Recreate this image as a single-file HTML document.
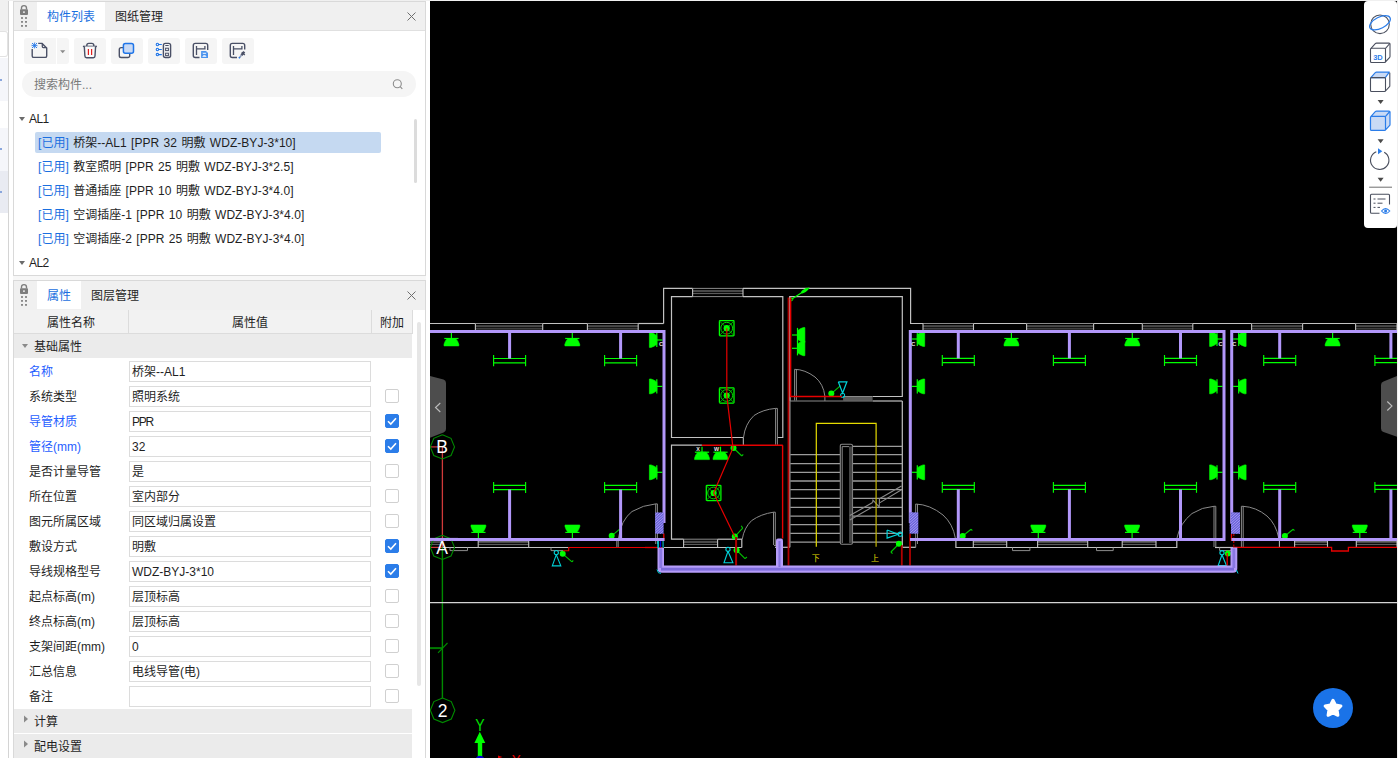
<!DOCTYPE html>
<html lang="zh-CN">
<head>
<meta charset="utf-8">
<title>构件列表</title>
<style>
html,body{margin:0;padding:0;}
body{width:1398px;height:758px;overflow:hidden;position:relative;background:#f7f7f7;
  font-family:"Liberation Sans","Noto Sans CJK SC",sans-serif;font-size:12px;color:#1f1f1f;}
.abs{position:absolute;}
#strip{left:0;top:0;width:9px;height:758px;background:#fff;border-right:1px solid #d4d4d4;box-sizing:border-box;}
#strip div{position:absolute;left:0;width:8px;}
#gapL{left:9px;top:0;width:4px;height:758px;background:#fff;}
.panel{position:absolute;left:13px;width:413px;background:#fff;border:1px solid #d9d9d9;box-sizing:border-box;}
.phead{position:absolute;left:0;top:0;right:0;height:29px;background:#f0f0f0;border-bottom:1px solid #e0e0e0;box-sizing:border-box;}
.tab{position:absolute;top:0;height:28px;line-height:30px;text-align:center;font-size:12px;color:#1f1f1f;white-space:nowrap;}
.tab.on{background:#fff;color:#1a6fe0;}
.lock{position:absolute;left:4px;top:2px;}
.close{position:absolute;right:9px;top:10px;}
.tb{position:absolute;top:36px;height:26px;background:#f5f5f5;border-radius:3px;}
.tb svg{position:absolute;left:0;top:0;}
#search{position:absolute;left:8px;top:69px;width:394px;height:26px;border-radius:13px;background:#f5f5f5;}
#search span{position:absolute;left:12px;top:0;line-height:29px;color:#7a7a7a;font-size:12px;}
.tree{position:absolute;left:0;height:24px;line-height:24px;white-space:nowrap;font-size:12px;}
.tree b{font-weight:normal;color:#1a6fe0;}
.tree{letter-spacing:0.04px;word-spacing:1px;}
.tree s{text-decoration:none;letter-spacing:0;}
.sel{position:absolute;left:21px;top:130px;width:346px;height:21px;background:#c5d9f1;border-radius:2px;}
.tri{position:absolute;width:0;height:0;border-left:3px solid transparent;border-right:3px solid transparent;border-top:4px solid #6b6b6b;}
.sb{position:absolute;width:3px;border-radius:2px;background:#dcdcdc;}
.th{position:absolute;top:30px;height:22px;line-height:22px;text-align:center;background:#f2f2f2;border-right:1px solid #dcdcdc;border-bottom:1px solid #dcdcdc;box-sizing:border-box;font-size:12px;}
.grp{position:absolute;left:0;width:398px;height:24px;line-height:26px;background:#ebebeb;font-size:12px;}
.grp span{position:absolute;left:20px;}
.pn{position:absolute;left:15px;height:25px;line-height:27px;font-size:12px;white-space:nowrap;}
.pn.b{color:#1f5eff;}
.pv{position:absolute;left:115px;width:242px;height:21px;line-height:21px;border:1px solid #dcdcdc;box-sizing:border-box;padding-left:2px;font-size:12px;white-space:nowrap;background:#fff;}
.cb{position:absolute;left:371px;width:14px;height:14px;border:1px solid #d0d0d0;border-radius:2px;box-sizing:border-box;background:#fff;}
.cb.on{background:#2b7de9;border-color:#2b7de9;}
.cb.on svg{position:absolute;left:-1px;top:-1px;}
#gapR{left:426px;top:0;width:4px;height:758px;background:#fff;}
#cad{left:430px;top:1px;width:967px;height:757px;background:#000;overflow:hidden;}
#topline{left:0;top:0;width:1398px;height:1px;background:#f0f0f0;}
#rightline{left:1397px;top:0;width:1px;height:758px;background:#f0f0f0;}
</style>
</head>
<body>
<div id="strip" class="abs">
  <div style="top:0;height:31px;background:#f0f0f0;"></div>
  <div style="top:31px;height:26px;background:#fff;border:1px solid #e2e2e2;border-left:none;border-radius:0 3px 3px 0;box-sizing:border-box;width:8px;"></div>
  <div style="top:58px;height:43px;background:#f5f6fa;"></div>
  <div style="top:128px;height:43px;background:#f5f6fa;"></div>
  <div style="top:171px;height:42px;background:#e9ebf2;"></div>
  <div style="top:79px;height:2px;width:2px;background:#8aa6dc;"></div>
  <div style="top:148px;height:2px;width:2px;background:#8aa6dc;"></div>
  <div style="top:191px;height:2px;width:2px;background:#8aa6dc;"></div>
</div>
<div id="gapL" class="abs"></div>
<div id="gapR" class="abs"></div>

<!-- PANEL 1 -->
<div class="panel" id="p1" style="top:1px;height:275px;">
  <div class="phead"></div>
  <svg class="lock" width="12" height="26" viewBox="0 0 12 26">
    <path d="M3.500 5.600 V4.100 a2.500 2.500 0 0 1 5 0 V5.600" fill="none" stroke="#7d7d7d" stroke-width="1.400"/>
    <rect x="2" y="5.200" width="8" height="5.700" rx="0.900" fill="#7d7d7d"/>
    <rect x="5.100" y="7.300" width="1.700" height="1.700" fill="#e8e8e8"/>
    <g fill="#7d7d7d"><rect x="3.100" y="13.100" width="1.800" height="1.800"/><rect x="7.100" y="13.100" width="1.800" height="1.800"/><rect x="3.100" y="17" width="1.800" height="1.800"/><rect x="7.100" y="17" width="1.800" height="1.800"/><rect x="3.100" y="21" width="1.800" height="1.800"/><rect x="7.100" y="21" width="1.800" height="1.800"/></g>
  </svg>
  <div class="tab on" style="left:23px;width:68px;">构件列表</div>
  <div class="tab" style="left:101px;width:48px;">图纸管理</div>
  <svg class="close" width="9" height="9" viewBox="0 0 9 9"><path d="M0.5 0.5 L8.5 8.5 M8.5 0.5 L0.5 8.5" stroke="#6e6e6e" stroke-width="1" fill="none"/></svg>

  <!-- toolbar -->
  <div class="tb" style="left:10px;width:32px;border-radius:3px 0 0 3px;">
    <svg width="32" height="26" viewBox="0 0 32 26"><path d="M14.200 5.400 H18.100 L22.700 10 V17.900 a1.500 1.500 0 0 1 -1.500 1.500 H9.700 a1.500 1.500 0 0 1 -1.500 -1.500 V11" fill="none" stroke="#4a5066" stroke-width="1.400"/><path d="M18.300 5.600 V8.600 a1 1 0 0 0 1 1 H22.500" fill="none" stroke="#4a5066" stroke-width="1.300"/><g stroke="#1f75e8" stroke-width="0.800"><path d="M8 5 L13 10 M13 5 L8 10 M10.500 4.600 V10.400 M7.600 7.500 H13.400 M8 6.200 L9.200 5 M11.800 5 L13 6.200 M8 8.800 L9.200 10 M11.800 10 L13 8.800"/></g></svg>
  </div>
  <div class="tb" style="left:43px;width:12px;border-radius:0 3px 3px 0;"><svg width="12" height="26" viewBox="0 0 12 26"><path d="M3.100 12.200 H8.300 L5.700 15.200 Z" fill="#8a8a8a"/></svg></div>
  <div class="tb" style="left:60px;width:32px;">
    <svg width="32" height="26" viewBox="0 0 32 26"><path d="M8.900 8.400 H22.900" stroke="#4a5066" stroke-width="1.400"/><path d="M12.800 8.400 V7.400 a2 2 0 0 1 2 -2 h3 a2 2 0 0 1 2 2 V8.400" fill="none" stroke="#4a5066" stroke-width="1.400"/><path d="M10.300 8.400 L10.900 18 a1.700 1.700 0 0 0 1.700 1.700 H19.300 a1.700 1.700 0 0 0 1.700 -1.700 L21.600 8.400" fill="#fafafa" stroke="#4a5066" stroke-width="1.400"/><path d="M14.400 10.900 V16.900 M17.600 10.900 V16.900" stroke="#e02020" stroke-width="1.200"/></svg>
  </div>
  <div class="tb" style="left:97px;width:32px;">
    <svg width="32" height="26" viewBox="0 0 32 26"><path d="M12 9.600 H10.100 a1.800 1.800 0 0 0 -1.800 1.800 V17.700 a1.800 1.800 0 0 0 1.800 1.800 H16.900 a1.800 1.800 0 0 0 1.800 -1.800 V15.800" fill="none" stroke="#4a5066" stroke-width="1.400"/><rect x="12.400" y="5.400" width="10.100" height="9.900" rx="2" fill="#c9daf5" stroke="#1f75e8" stroke-width="1.500"/></svg>
  </div>
  <div class="tb" style="left:134px;width:32px;">
    <svg width="32" height="26" viewBox="0 0 32 26"><g fill="none" stroke="#1f75e8" stroke-width="1.100"><circle cx="9.400" cy="6.500" r="1.200"/><circle cx="9.400" cy="11.500" r="1.200"/><circle cx="9.400" cy="16.600" r="1.200"/><path d="M10.600 6.500 H13.800 M10.600 11.500 H13.800 M10.600 16.600 H13.800"/></g><rect x="15.400" y="5.400" width="7.200" height="14.100" rx="2" fill="none" stroke="#4a5066" stroke-width="1.400"/><path d="M17.300 7.500 H20.700" stroke="#4a5066" stroke-width="1"/><rect x="17.600" y="10.200" width="2.800" height="2.400" fill="none" stroke="#4a5066" stroke-width="1"/><rect x="17.600" y="15.200" width="2.800" height="2.400" fill="none" stroke="#4a5066" stroke-width="1"/></svg>
  </div>
  <div class="tb" style="left:171px;width:32px;">
    <svg width="32" height="26" viewBox="0 0 32 26"><path d="M14.500 19.500 H10.300 a2 2 0 0 1 -2 -2 V7.400 a2 2 0 0 1 2 -2 H20.700 a2 2 0 0 1 2 2 V12" fill="none" stroke="#4a5066" stroke-width="1.400"/><path d="M11.500 8.100 V16.900 M11.500 10.900 H19.900 M19.900 8.100 V11.500" fill="none" stroke="#4a5066" stroke-width="1.300"/><path d="M16.100 13.100 H21 L23 15.100 V19.900 H16.100 Z" fill="#4a93ee"/><path d="M17.200 14.800 h4.400 l-0.900 1.300 h-2.600z M17.200 19 l1.300 -1.900 h1.800 l1.300 1.900z" fill="#d6e6fb"/></svg>
  </div>
  <div class="tb" style="left:208px;width:32px;">
    <svg width="32" height="26" viewBox="0 0 32 26"><path d="M15 19.500 H10.300 a2 2 0 0 1 -2 -2 V7.400 a2 2 0 0 1 2 -2 H20.700 a2 2 0 0 1 2 2 V11.600" fill="none" stroke="#4a5066" stroke-width="1.400"/><path d="M11.500 8.100 V16.900 M11.500 10.900 H19.900 M19.900 8.100 V11.500" fill="none" stroke="#4a5066" stroke-width="1.300"/><path d="M22.300 13.800 L19.400 17.300" stroke="#4a5066" stroke-width="2.400"/><path d="M19.800 14.200 L22.800 16.900" stroke="#4a5066" stroke-width="1.300"/><path d="M19.600 17 L17.400 19.700" stroke="#8a98b5" stroke-width="1.500"/><path d="M17.800 19.300 L16.900 20.300" stroke="#1f75e8" stroke-width="1.500"/></svg>
  </div>

  <div id="search"><span>搜索构件...</span>
    <svg style="position:absolute;left:369px;top:6px;" width="14" height="14" viewBox="0 0 14 14"><circle cx="6.300" cy="6.700" r="4" fill="none" stroke="#8c8c8c" stroke-width="1.100"/><path d="M9.200 9.700 L11.300 11.800" stroke="#8c8c8c" stroke-width="1.100"/></svg>
  </div>

  <div class="sel"></div>
  <div class="tri" style="left:5px;top:115px;"></div>
  <div class="tree" style="left:15px;top:105px;letter-spacing:-0.6px;">AL1</div>
  <div class="tree" style="left:24px;top:129px;"><b>[<s>已用</s>]</b> <s>桥架</s>--AL1 [PPR 32 <s>明敷</s> WDZ-BYJ-3*10]</div>
  <div class="tree" style="left:24px;top:153px;"><b>[<s>已用</s>]</b> <s>教室照明</s> [PPR 25 <s>明敷</s> WDZ-BYJ-3*2.5]</div>
  <div class="tree" style="left:24px;top:177px;"><b>[<s>已用</s>]</b> <s>普通插座</s> [PPR 10 <s>明敷</s> WDZ-BYJ-3*4.0]</div>
  <div class="tree" style="left:24px;top:201px;"><b>[<s>已用</s>]</b> <s>空调插座</s>-1 [PPR 10 <s>明敷</s> WDZ-BYJ-3*4.0]</div>
  <div class="tree" style="left:24px;top:225px;"><b>[<s>已用</s>]</b> <s>空调插座</s>-2 [PPR 25 <s>明敷</s> WDZ-BYJ-3*4.0]</div>
  <div class="tri" style="left:5px;top:259px;"></div>
  <div class="tree" style="left:15px;top:249px;letter-spacing:-0.6px;">AL2</div>
  <div class="sb" style="left:400px;top:117px;height:64px;"></div>
</div>

<!-- PANEL 2 -->
<div class="panel" id="p2" style="top:280px;height:480px;">
  <div class="phead" style="height:29px;border-bottom:none;"></div>
  <svg class="lock" width="12" height="26" viewBox="0 0 12 26">
    <path d="M3.500 5.600 V4.100 a2.500 2.500 0 0 1 5 0 V5.600" fill="none" stroke="#7d7d7d" stroke-width="1.400"/>
    <rect x="2" y="5.200" width="8" height="5.700" rx="0.900" fill="#7d7d7d"/>
    <rect x="5.100" y="7.300" width="1.700" height="1.700" fill="#e8e8e8"/>
    <g fill="#7d7d7d"><rect x="3.100" y="13.100" width="1.800" height="1.800"/><rect x="7.100" y="13.100" width="1.800" height="1.800"/><rect x="3.100" y="17" width="1.800" height="1.800"/><rect x="7.100" y="17" width="1.800" height="1.800"/><rect x="3.100" y="21" width="1.800" height="1.800"/><rect x="7.100" y="21" width="1.800" height="1.800"/></g>
  </svg>
  <div class="tab on" style="left:23px;width:44px;height:28px;line-height:31px;">属性</div>
  <div class="tab" style="left:77px;width:48px;height:28px;line-height:31px;">图层管理</div>
  <svg class="close" width="9" height="9" viewBox="0 0 9 9" style="top:10px;"><path d="M0.5 0.5 L8.5 8.5 M8.500 0.500 L0.500 8.500" stroke="#6e6e6e" stroke-width="1" fill="none"/></svg>
  <div class="th" style="left:0;width:115px;top:29px;height:24px;line-height:26px;padding-left:0;">属性名称</div>
  <div class="th" style="left:115px;width:243px;top:29px;height:24px;line-height:26px;">属性值</div>
  <div class="th" style="left:358px;width:41px;top:29px;height:24px;line-height:26px;">附加</div>
  <div class="grp" style="top:53px;"><span>基础属性</span></div>
  <div class="tri" style="left:8px;top:63px;border-top-color:#8a8a8a;"></div>
  <div class="pn b" style="top:78px;">名称</div><div class="pv" style="top:80px;">桥架--AL1</div>
  <div class="pn" style="top:103px;">系统类型</div><div class="pv" style="top:105px;">照明系统</div>
  <div class="cb" style="top:108px;"></div>
  <div class="pn b" style="top:128px;">导管材质</div><div class="pv" style="top:130px;letter-spacing:-1.2px;">PPR</div>
  <div class="cb on" style="top:133px;"><svg width="14" height="14" viewBox="0 0 14 14"><path d="M3 7.200 L5.800 10 L11 4.300" fill="none" stroke="#fff" stroke-width="1.600"/></svg></div>
  <div class="pn b" style="top:153px;">管径(mm)</div><div class="pv" style="top:155px;">32</div>
  <div class="cb on" style="top:158px;"><svg width="14" height="14" viewBox="0 0 14 14"><path d="M3 7.200 L5.800 10 L11 4.300" fill="none" stroke="#fff" stroke-width="1.600"/></svg></div>
  <div class="pn" style="top:178px;">是否计量导管</div><div class="pv" style="top:180px;">是</div>
  <div class="cb" style="top:183px;"></div>
  <div class="pn" style="top:203px;">所在位置</div><div class="pv" style="top:205px;">室内部分</div>
  <div class="cb" style="top:208px;"></div>
  <div class="pn" style="top:228px;">图元所属区域</div><div class="pv" style="top:230px;">同区域归属设置</div>
  <div class="cb" style="top:233px;"></div>
  <div class="pn" style="top:253px;">敷设方式</div><div class="pv" style="top:255px;">明敷</div>
  <div class="cb on" style="top:258px;"><svg width="14" height="14" viewBox="0 0 14 14"><path d="M3 7.200 L5.800 10 L11 4.300" fill="none" stroke="#fff" stroke-width="1.600"/></svg></div>
  <div class="pn" style="top:278px;">导线规格型号</div><div class="pv" style="top:280px;">WDZ-BYJ-3*10</div>
  <div class="cb on" style="top:283px;"><svg width="14" height="14" viewBox="0 0 14 14"><path d="M3 7.200 L5.800 10 L11 4.300" fill="none" stroke="#fff" stroke-width="1.600"/></svg></div>
  <div class="pn" style="top:303px;">起点标高(m)</div><div class="pv" style="top:305px;">层顶标高</div>
  <div class="cb" style="top:308px;"></div>
  <div class="pn" style="top:328px;">终点标高(m)</div><div class="pv" style="top:330px;">层顶标高</div>
  <div class="cb" style="top:333px;"></div>
  <div class="pn" style="top:353px;">支架间距(mm)</div><div class="pv" style="top:355px;">0</div>
  <div class="cb" style="top:358px;"></div>
  <div class="pn" style="top:378px;">汇总信息</div><div class="pv" style="top:380px;">电线导管(电)</div>
  <div class="cb" style="top:383px;"></div>
  <div class="pn" style="top:403px;">备注</div><div class="pv" style="top:405px;"></div>
  <div class="cb" style="top:408px;"></div>
  <div class="grp" style="top:428px;"><span>计算</span></div>
  <div class="grp" style="top:453px;"><span>配电设置</span></div>
  <svg style="position:absolute;left:9px;top:434px;" width="6" height="8" viewBox="0 0 6 8"><path d="M1 0.500 L5 4 L1 7.500z" fill="#8a8a8a"/></svg>
  <svg style="position:absolute;left:9px;top:459px;" width="6" height="8" viewBox="0 0 6 8"><path d="M1 0.500 L5 4 L1 7.500z" fill="#8a8a8a"/></svg>
  <div class="sb" style="left:403px;top:41px;height:364px;width:4px;background:#e6e6e6;"></div>
</div>

<div id="cad" class="abs"></div>
<!--CAD-->
<svg id="cadsvg" class="abs" style="left:430px;top:0;" width="967" height="758" viewBox="430 0 967 758">
<defs><clipPath id="hc655"><rect x="655.2" y="512.5" width="8.4" height="21.2"/></clipPath><clipPath id="hc909"><rect x="909.5" y="512.4" width="8.8" height="21.2"/></clipPath><clipPath id="hc1231"><rect x="1231.0" y="512.4" width="9.0" height="21.4"/></clipPath></defs>
<line x1="430.0" y1="323.5" x2="475.4" y2="323.5" stroke="#c2c2c2" stroke-width="1.2" />
<rect x="475.4" y="325.1" width="67.3" height="2.2" fill="#484848" stroke="none" stroke-width="0"/>
<line x1="475.4" y1="328.9" x2="542.7" y2="328.9" stroke="#707070" stroke-width="0.9" />
<line x1="475.4" y1="323.5" x2="542.7" y2="323.5" stroke="#8a8a8a" stroke-width="1" />
<line x1="475.4" y1="323.5" x2="475.4" y2="330.0" stroke="#c2c2c2" stroke-width="1.1" />
<line x1="542.7" y1="323.5" x2="542.7" y2="330.0" stroke="#c2c2c2" stroke-width="1.1" />
<line x1="542.7" y1="323.5" x2="587.4" y2="323.5" stroke="#c2c2c2" stroke-width="1.2" />
<rect x="587.4" y="325.1" width="50.8" height="2.2" fill="#484848" stroke="none" stroke-width="0"/>
<line x1="587.4" y1="328.9" x2="638.2" y2="328.9" stroke="#707070" stroke-width="0.9" />
<line x1="587.4" y1="323.5" x2="638.2" y2="323.5" stroke="#8a8a8a" stroke-width="1" />
<line x1="587.4" y1="323.5" x2="587.4" y2="330.0" stroke="#c2c2c2" stroke-width="1.1" />
<line x1="638.2" y1="323.5" x2="638.2" y2="330.0" stroke="#c2c2c2" stroke-width="1.1" />
<line x1="638.2" y1="323.5" x2="663.6" y2="323.5" stroke="#c2c2c2" stroke-width="1.2" />
<path d="M663.6 323.5 L663.6 288.4 L692.6 288.4" fill="none" stroke="#c2c2c2" stroke-width="1.2" />
<rect x="692.6" y="290.0" width="50.4" height="2.2" fill="#484848" stroke="none" stroke-width="0"/>
<line x1="692.6" y1="293.6" x2="743.0" y2="293.6" stroke="#707070" stroke-width="0.9" />
<line x1="692.6" y1="288.4" x2="743.0" y2="288.4" stroke="#8a8a8a" stroke-width="1" />
<line x1="692.6" y1="296.6" x2="743.0" y2="296.6" stroke="#8a8a8a" stroke-width="1" />
<line x1="692.6" y1="288.4" x2="692.6" y2="296.6" stroke="#c2c2c2" stroke-width="1.1" />
<line x1="743.0" y1="288.4" x2="743.0" y2="296.6" stroke="#c2c2c2" stroke-width="1.1" />
<path d="M743.0 288.4 L910.6 288.4 L910.6 323.5 L923.0 323.5" fill="none" stroke="#c2c2c2" stroke-width="1.2" />
<path d="M692.6 296.6 L671.5 296.6 L671.5 437.5 L743.3 437.5" fill="none" stroke="#c2c2c2" stroke-width="1.2" />
<path d="M743.0 296.6 L782.8 296.6 L782.8 437.5 L777.4 437.5" fill="none" stroke="#c2c2c2" stroke-width="1.2" />
<path d="M701.9 445.2 L671.5 445.2 L671.5 539.2 L683.6 539.2" fill="none" stroke="#c2c2c2" stroke-width="1.2" />
<line x1="717.6" y1="539.2" x2="742.2" y2="539.2" stroke="#c2c2c2" stroke-width="1.2" />
<rect x="683.6" y="540.8" width="34.0" height="2.2" fill="#484848" stroke="none" stroke-width="0"/>
<line x1="683.6" y1="544.4" x2="717.6" y2="544.4" stroke="#707070" stroke-width="0.9" />
<line x1="683.6" y1="539.2" x2="717.6" y2="539.2" stroke="#8a8a8a" stroke-width="1" />
<line x1="683.6" y1="547.5" x2="717.6" y2="547.5" stroke="#8a8a8a" stroke-width="1" />
<line x1="683.6" y1="539.2" x2="683.6" y2="547.5" stroke="#c2c2c2" stroke-width="1.1" />
<line x1="717.6" y1="539.2" x2="717.6" y2="547.5" stroke="#c2c2c2" stroke-width="1.1" />
<line x1="664.0" y1="547.5" x2="741.8" y2="547.5" stroke="#c2c2c2" stroke-width="1.2" />
<line x1="741.8" y1="539.2" x2="741.8" y2="547.5" stroke="#c2c2c2" stroke-width="1.2" />
<path d="M789.8 401.0 L789.8 296.6 L902.3 296.6 L902.3 396.5 L872.6 396.5" fill="none" stroke="#c2c2c2" stroke-width="1.2" />
<line x1="789.8" y1="296.6" x2="789.8" y2="547.3" stroke="#c2c2c2" stroke-width="1.2" />
<line x1="789.8" y1="401.0" x2="843.1" y2="401.0" stroke="#8a8a8a" stroke-width="1.2" />
<line x1="872.6" y1="401.0" x2="902.3" y2="401.0" stroke="#c2c2c2" stroke-width="1.2" />
<rect x="843.1" y="397.0" width="29.5" height="3.6" fill="#5a5a5a" stroke="none" stroke-width="0"/>
<line x1="843.1" y1="396.5" x2="872.6" y2="396.5" stroke="#8a8a8a" stroke-width="1" />
<line x1="843.1" y1="401.0" x2="872.6" y2="401.0" stroke="#8a8a8a" stroke-width="1" />
<line x1="902.3" y1="401.0" x2="902.3" y2="547.3" stroke="#c2c2c2" stroke-width="1.2" />
<path d="M775.0 547.3 L789.8 547.3" fill="none" stroke="#c2c2c2" stroke-width="1.2" />
<path d="M902.3 547.3 L915.7 547.3" fill="none" stroke="#c2c2c2" stroke-width="1.2" />
<rect x="923.0" y="325.1" width="50.5" height="2.2" fill="#484848" stroke="none" stroke-width="0"/>
<line x1="923.0" y1="328.9" x2="973.5" y2="328.9" stroke="#707070" stroke-width="0.9" />
<line x1="923.0" y1="323.5" x2="973.5" y2="323.5" stroke="#8a8a8a" stroke-width="1" />
<line x1="923.0" y1="323.5" x2="923.0" y2="330.0" stroke="#c2c2c2" stroke-width="1.1" />
<line x1="973.5" y1="323.5" x2="973.5" y2="330.0" stroke="#c2c2c2" stroke-width="1.1" />
<line x1="973.5" y1="323.5" x2="1026.6" y2="323.5" stroke="#c2c2c2" stroke-width="1.2" />
<rect x="1026.6" y="325.1" width="67.0" height="2.2" fill="#484848" stroke="none" stroke-width="0"/>
<line x1="1026.6" y1="328.9" x2="1093.6" y2="328.9" stroke="#707070" stroke-width="0.9" />
<line x1="1026.6" y1="323.5" x2="1093.6" y2="323.5" stroke="#8a8a8a" stroke-width="1" />
<line x1="1026.6" y1="323.5" x2="1026.6" y2="330.0" stroke="#c2c2c2" stroke-width="1.1" />
<line x1="1093.6" y1="323.5" x2="1093.6" y2="330.0" stroke="#c2c2c2" stroke-width="1.1" />
<line x1="1093.6" y1="323.5" x2="1142.3" y2="323.5" stroke="#c2c2c2" stroke-width="1.2" />
<rect x="1142.3" y="325.1" width="50.5" height="2.2" fill="#484848" stroke="none" stroke-width="0"/>
<line x1="1142.3" y1="328.9" x2="1192.8" y2="328.9" stroke="#707070" stroke-width="0.9" />
<line x1="1142.3" y1="323.5" x2="1192.8" y2="323.5" stroke="#8a8a8a" stroke-width="1" />
<line x1="1142.3" y1="323.5" x2="1142.3" y2="330.0" stroke="#c2c2c2" stroke-width="1.1" />
<line x1="1192.8" y1="323.5" x2="1192.8" y2="330.0" stroke="#c2c2c2" stroke-width="1.1" />
<line x1="1192.8" y1="323.5" x2="1251.6" y2="323.5" stroke="#c2c2c2" stroke-width="1.2" />
<rect x="1251.6" y="325.1" width="51.0" height="2.2" fill="#484848" stroke="none" stroke-width="0"/>
<line x1="1251.6" y1="328.9" x2="1302.6" y2="328.9" stroke="#707070" stroke-width="0.9" />
<line x1="1251.6" y1="323.5" x2="1302.6" y2="323.5" stroke="#8a8a8a" stroke-width="1" />
<line x1="1251.6" y1="323.5" x2="1251.6" y2="330.0" stroke="#c2c2c2" stroke-width="1.1" />
<line x1="1302.6" y1="323.5" x2="1302.6" y2="330.0" stroke="#c2c2c2" stroke-width="1.1" />
<line x1="1302.6" y1="323.5" x2="1355.6" y2="323.5" stroke="#c2c2c2" stroke-width="1.2" />
<rect x="1355.6" y="325.1" width="41.4" height="2.2" fill="#484848" stroke="none" stroke-width="0"/>
<line x1="1355.6" y1="328.9" x2="1397.0" y2="328.9" stroke="#707070" stroke-width="0.9" />
<line x1="1355.6" y1="323.5" x2="1397.0" y2="323.5" stroke="#8a8a8a" stroke-width="1" />
<line x1="1355.6" y1="323.5" x2="1355.6" y2="330.0" stroke="#c2c2c2" stroke-width="1.1" />
<line x1="1397.0" y1="323.5" x2="1397.0" y2="330.0" stroke="#c2c2c2" stroke-width="1.1" />
<line x1="442.0" y1="547.5" x2="478.2" y2="547.5" stroke="#c2c2c2" stroke-width="1.2" />
<rect x="478.2" y="541.0" width="50.5" height="2.2" fill="#484848" stroke="none" stroke-width="0"/>
<line x1="478.2" y1="544.6" x2="528.7" y2="544.6" stroke="#707070" stroke-width="0.9" />
<line x1="478.2" y1="541.0" x2="528.7" y2="541.0" stroke="#8a8a8a" stroke-width="1" />
<line x1="478.2" y1="547.5" x2="528.7" y2="547.5" stroke="#c2c2c2" stroke-width="1" />
<line x1="478.2" y1="541.0" x2="478.2" y2="547.5" stroke="#c2c2c2" stroke-width="1.1" />
<line x1="528.7" y1="541.0" x2="528.7" y2="547.5" stroke="#c2c2c2" stroke-width="1.1" />
<line x1="478.2" y1="547.5" x2="568.5" y2="547.5" stroke="#c2c2c2" stroke-width="1.2" />
<path d="M450.0 547.5 L450.0 550.6 L467.5 550.6 L467.5 547.5" fill="none" stroke="#8a8a8a" stroke-width="1" />
<path d="M551.0 547.5 L551.0 550.6 L563.0 550.6" fill="none" stroke="#8a8a8a" stroke-width="1" />
<line x1="616.8" y1="541.0" x2="616.8" y2="547.5" stroke="#8a8a8a" stroke-width="1" />
<line x1="618.2" y1="541.0" x2="618.2" y2="547.5" stroke="#8a8a8a" stroke-width="1" />
<path d="M955.9 541.0 L955.9 547.5 L1176.8 547.5 L1176.8 541.0" fill="none" stroke="#c2c2c2" stroke-width="1.2" />
<rect x="973.3" y="541.0" width="33.4" height="2.2" fill="#484848" stroke="none" stroke-width="0"/>
<line x1="973.3" y1="544.6" x2="1006.7" y2="544.6" stroke="#707070" stroke-width="0.9" />
<line x1="973.3" y1="541.0" x2="1006.7" y2="541.0" stroke="#8a8a8a" stroke-width="1" />
<line x1="973.3" y1="547.5" x2="1006.7" y2="547.5" stroke="#c2c2c2" stroke-width="1" />
<line x1="973.3" y1="541.0" x2="973.3" y2="547.5" stroke="#c2c2c2" stroke-width="1.1" />
<line x1="1006.7" y1="541.0" x2="1006.7" y2="547.5" stroke="#c2c2c2" stroke-width="1.1" />
<rect x="1037.6" y="541.0" width="50.1" height="2.2" fill="#484848" stroke="none" stroke-width="0"/>
<line x1="1037.6" y1="544.6" x2="1087.7" y2="544.6" stroke="#707070" stroke-width="0.9" />
<line x1="1037.6" y1="541.0" x2="1087.7" y2="541.0" stroke="#8a8a8a" stroke-width="1" />
<line x1="1037.6" y1="547.5" x2="1087.7" y2="547.5" stroke="#c2c2c2" stroke-width="1" />
<line x1="1037.6" y1="541.0" x2="1037.6" y2="547.5" stroke="#c2c2c2" stroke-width="1.1" />
<line x1="1087.7" y1="541.0" x2="1087.7" y2="547.5" stroke="#c2c2c2" stroke-width="1.1" />
<rect x="1122.2" y="541.0" width="33.8" height="2.2" fill="#484848" stroke="none" stroke-width="0"/>
<line x1="1122.2" y1="544.6" x2="1156.0" y2="544.6" stroke="#707070" stroke-width="0.9" />
<line x1="1122.2" y1="541.0" x2="1156.0" y2="541.0" stroke="#8a8a8a" stroke-width="1" />
<line x1="1122.2" y1="547.5" x2="1156.0" y2="547.5" stroke="#c2c2c2" stroke-width="1" />
<line x1="1122.2" y1="541.0" x2="1122.2" y2="547.5" stroke="#c2c2c2" stroke-width="1.1" />
<line x1="1156.0" y1="541.0" x2="1156.0" y2="547.5" stroke="#c2c2c2" stroke-width="1.1" />
<path d="M1012.5 547.5 L1012.5 550.6 L1029.9 550.6 L1029.9 547.5" fill="none" stroke="#8a8a8a" stroke-width="1" />
<path d="M1096.5 547.5 L1096.5 550.6 L1113.2 550.6 L1113.2 547.5" fill="none" stroke="#8a8a8a" stroke-width="1" />
<path d="M1215.0 547.5 L1233.0 547.5" fill="none" stroke="#c2c2c2" stroke-width="1.2" />
<path d="M1219.6 547.5 L1219.6 550.6 L1231.0 550.6" fill="none" stroke="#8a8a8a" stroke-width="1" />
<rect x="1294.6" y="541.0" width="32.9" height="2.2" fill="#484848" stroke="none" stroke-width="0"/>
<line x1="1294.6" y1="544.6" x2="1327.5" y2="544.6" stroke="#707070" stroke-width="0.9" />
<line x1="1294.6" y1="541.0" x2="1327.5" y2="541.0" stroke="#8a8a8a" stroke-width="1" />
<line x1="1294.6" y1="547.5" x2="1327.5" y2="547.5" stroke="#c2c2c2" stroke-width="1" />
<line x1="1294.6" y1="541.0" x2="1294.6" y2="547.5" stroke="#c2c2c2" stroke-width="1.1" />
<line x1="1327.5" y1="541.0" x2="1327.5" y2="547.5" stroke="#c2c2c2" stroke-width="1.1" />
<rect x="1356.3" y="541.0" width="40.7" height="2.2" fill="#484848" stroke="none" stroke-width="0"/>
<line x1="1356.3" y1="544.6" x2="1397.0" y2="544.6" stroke="#707070" stroke-width="0.9" />
<line x1="1356.3" y1="541.0" x2="1397.0" y2="541.0" stroke="#8a8a8a" stroke-width="1" />
<line x1="1356.3" y1="547.5" x2="1397.0" y2="547.5" stroke="#c2c2c2" stroke-width="1" />
<line x1="1356.3" y1="541.0" x2="1356.3" y2="547.5" stroke="#c2c2c2" stroke-width="1.1" />
<line x1="1397.0" y1="541.0" x2="1397.0" y2="547.5" stroke="#c2c2c2" stroke-width="1.1" />
<line x1="1279.4" y1="541.0" x2="1279.4" y2="547.5" stroke="#c2c2c2" stroke-width="1" />
<path d="M618.5 538 Q621 520 632 511.5 Q643 505 655.7 503.9" fill="none" stroke="#8a8a8a" stroke-width="1" />
<line x1="655.7" y1="503.9" x2="655.7" y2="544.0" stroke="#8a8a8a" stroke-width="1" />
<line x1="657.4" y1="503.9" x2="657.4" y2="544.0" stroke="#8a8a8a" stroke-width="1" />
<line x1="655.7" y1="503.9" x2="657.4" y2="503.9" stroke="#8a8a8a" stroke-width="1" />
<path d="M743.5 437.5 Q745 424 754 415.5 Q763 409.5 775.5 408.4" fill="none" stroke="#8a8a8a" stroke-width="1" />
<line x1="775.6" y1="408.4" x2="775.6" y2="444.8" stroke="#8a8a8a" stroke-width="1" />
<line x1="777.4" y1="408.4" x2="777.4" y2="444.8" stroke="#8a8a8a" stroke-width="1" />
<line x1="775.6" y1="408.4" x2="777.4" y2="408.4" stroke="#8a8a8a" stroke-width="1" />
<line x1="743.3" y1="437.5" x2="743.3" y2="445.2" stroke="#c2c2c2" stroke-width="1" />
<path d="M742.3 539 Q744 528 751.6 520.6 Q761 514 773.5 512.2" fill="none" stroke="#8a8a8a" stroke-width="1" />
<line x1="773.5" y1="512.2" x2="773.5" y2="545.0" stroke="#8a8a8a" stroke-width="1" />
<line x1="775.3" y1="512.2" x2="775.3" y2="545.0" stroke="#8a8a8a" stroke-width="1" />
<line x1="773.5" y1="512.2" x2="775.3" y2="512.2" stroke="#8a8a8a" stroke-width="1" />
<line x1="774.0" y1="545.5" x2="777.0" y2="545.5" stroke="#8a8a8a" stroke-width="1" />
<path d="M794.6 369.3 Q805 369.5 815 377 Q823.5 384 824.9 396.3 L824.9 401" fill="none" stroke="#8a8a8a" stroke-width="1" />
<line x1="794.6" y1="369.3" x2="794.6" y2="400.5" stroke="#8a8a8a" stroke-width="1" />
<line x1="796.4" y1="369.3" x2="796.4" y2="400.5" stroke="#8a8a8a" stroke-width="1" />
<path d="M915.7 504 Q930 504.5 943 515 Q953 524 955.3 538" fill="none" stroke="#8a8a8a" stroke-width="1" />
<line x1="915.7" y1="504.0" x2="915.7" y2="544.0" stroke="#8a8a8a" stroke-width="1" />
<line x1="917.5" y1="504.0" x2="917.5" y2="544.0" stroke="#8a8a8a" stroke-width="1" />
<line x1="915.7" y1="544.0" x2="915.7" y2="547.3" stroke="#8a8a8a" stroke-width="1" />
<path d="M1177 538 Q1180 523 1192 513.5 Q1202 507 1214 506.3" fill="none" stroke="#8a8a8a" stroke-width="1" />
<line x1="1214.0" y1="506.3" x2="1214.0" y2="547.0" stroke="#8a8a8a" stroke-width="1" />
<line x1="1215.8" y1="506.3" x2="1215.8" y2="547.0" stroke="#8a8a8a" stroke-width="1" />
<line x1="1214.0" y1="506.3" x2="1215.8" y2="506.3" stroke="#8a8a8a" stroke-width="1" />
<path d="M1243 506.3 Q1256 507 1267 516 Q1276 524 1278.7 538" fill="none" stroke="#8a8a8a" stroke-width="1" />
<line x1="1241.4" y1="506.3" x2="1241.4" y2="547.0" stroke="#8a8a8a" stroke-width="1" />
<line x1="1243.2" y1="506.3" x2="1243.2" y2="547.0" stroke="#8a8a8a" stroke-width="1" />
<line x1="1241.4" y1="506.3" x2="1243.2" y2="506.3" stroke="#8a8a8a" stroke-width="1" />
<line x1="790.3" y1="454.7" x2="840.1" y2="454.7" stroke="#9c9c9c" stroke-width="1.3" />
<line x1="852.5" y1="454.7" x2="902.1" y2="454.7" stroke="#9c9c9c" stroke-width="1.3" />
<line x1="790.3" y1="463.6" x2="840.1" y2="463.6" stroke="#9c9c9c" stroke-width="1.3" />
<line x1="852.5" y1="463.6" x2="902.1" y2="463.6" stroke="#9c9c9c" stroke-width="1.3" />
<line x1="790.3" y1="472.4" x2="840.1" y2="472.4" stroke="#9c9c9c" stroke-width="1.3" />
<line x1="852.5" y1="472.4" x2="902.1" y2="472.4" stroke="#9c9c9c" stroke-width="1.3" />
<line x1="790.3" y1="481.0" x2="840.1" y2="481.0" stroke="#9c9c9c" stroke-width="1.3" />
<line x1="852.5" y1="481.0" x2="902.1" y2="481.0" stroke="#9c9c9c" stroke-width="1.3" />
<line x1="790.3" y1="489.7" x2="840.1" y2="489.7" stroke="#9c9c9c" stroke-width="1.3" />
<line x1="852.5" y1="489.7" x2="902.1" y2="489.7" stroke="#9c9c9c" stroke-width="1.3" />
<line x1="790.3" y1="498.4" x2="840.1" y2="498.4" stroke="#9c9c9c" stroke-width="1.3" />
<line x1="852.5" y1="498.4" x2="902.1" y2="498.4" stroke="#9c9c9c" stroke-width="1.3" />
<line x1="790.3" y1="507.3" x2="840.1" y2="507.3" stroke="#9c9c9c" stroke-width="1.3" />
<line x1="852.5" y1="507.3" x2="902.1" y2="507.3" stroke="#9c9c9c" stroke-width="1.3" />
<line x1="790.3" y1="516.1" x2="840.1" y2="516.1" stroke="#9c9c9c" stroke-width="1.3" />
<line x1="852.5" y1="516.1" x2="902.1" y2="516.1" stroke="#9c9c9c" stroke-width="1.3" />
<line x1="790.3" y1="524.7" x2="840.1" y2="524.7" stroke="#9c9c9c" stroke-width="1.3" />
<line x1="852.5" y1="524.7" x2="902.1" y2="524.7" stroke="#9c9c9c" stroke-width="1.3" />
<line x1="790.3" y1="533.4" x2="840.1" y2="533.4" stroke="#9c9c9c" stroke-width="1.3" />
<line x1="852.5" y1="533.4" x2="902.1" y2="533.4" stroke="#9c9c9c" stroke-width="1.3" />
<line x1="790.3" y1="542.2" x2="840.1" y2="542.2" stroke="#9c9c9c" stroke-width="1.3" />
<line x1="852.5" y1="542.2" x2="902.1" y2="542.2" stroke="#9c9c9c" stroke-width="1.3" />
<line x1="852.5" y1="446.4" x2="902.1" y2="446.4" stroke="#9c9c9c" stroke-width="1.3" />
<rect x="840.3" y="444.2" width="12.2" height="100" rx="1.5" fill="#000" stroke="#8a8a8a" stroke-width="1.1"/>
<rect x="849.0" y="446.4" width="3.2" height="96.5" fill="#444" stroke="none" stroke-width="0"/>
<path d="M842.2 543 V446.6 H849" fill="none" stroke="#8a8a8a" stroke-width="1" />
<path d="M849.8 515.6 L872.6 502.6 M879.4 498.7 L901.5 486.1" fill="none" stroke="#8a8a8a" stroke-width="1.1" />
<path d="M849.8 519.9 L872.8 506.800 M879.6 502.900 L901.500 489.800" fill="none" stroke="#8a8a8a" stroke-width="1.1" />
<path d="M872.6 502.6 L873 500.2 L879.2 506.9 L879.5 498.7" fill="none" stroke="#8a8a8a" stroke-width="1.1" />
<path d="M816.3 546.7 V423.3 H876.1 V446" fill="none" stroke="#e6dc00" stroke-width="1.2" />
<line x1="876.1" y1="446.0" x2="876.1" y2="546.7" stroke="#c2b400" stroke-width="1.2" />
<text x="815.8" y="561" font-size="8" fill="#e6dc00" text-anchor="middle" font-family="'Liberation Sans','Noto Sans CJK SC',sans-serif">下</text>
<text x="875" y="561" font-size="8" fill="#e6dc00" text-anchor="middle" font-family="'Liberation Sans','Noto Sans CJK SC',sans-serif">上</text>
<line x1="451.4" y1="333.0" x2="451.4" y2="338.5" stroke="#00ff00" stroke-width="1.2" />
<line x1="444.3" y1="338.5" x2="458.5" y2="338.5" stroke="#00ff00" stroke-width="1.2" />
<path d="M447.2 338.5 Q444.8 341.0 444.0 344.3 L444.0 345.9 L458.8 345.9 L458.8 344.3 Q458.0 341.0 455.6 338.5 Z" fill="#00ff00" stroke="#00ff00" stroke-width="0.6" />
<line x1="572.3" y1="333.0" x2="572.3" y2="338.5" stroke="#00ff00" stroke-width="1.2" />
<line x1="565.2" y1="338.5" x2="579.4" y2="338.5" stroke="#00ff00" stroke-width="1.2" />
<path d="M568.1 338.5 Q565.7 341.0 564.9 344.3 L564.9 345.9 L579.7 345.9 L579.7 344.3 Q578.9 341.0 576.5 338.5 Z" fill="#00ff00" stroke="#00ff00" stroke-width="0.6" />
<line x1="478.4" y1="537.9" x2="478.4" y2="532.4" stroke="#00ff00" stroke-width="1.2" />
<line x1="471.3" y1="532.4" x2="485.5" y2="532.4" stroke="#00ff00" stroke-width="1.2" />
<path d="M474.2 532.4 Q471.8 529.9 471.0 526.6 L471.0 525.0 L485.8 525.0 L485.8 526.6 Q485.0 529.9 482.6 532.4 Z" fill="#00ff00" stroke="#00ff00" stroke-width="0.6" />
<line x1="572.4" y1="537.9" x2="572.4" y2="532.4" stroke="#00ff00" stroke-width="1.2" />
<line x1="565.3" y1="532.4" x2="579.5" y2="532.4" stroke="#00ff00" stroke-width="1.2" />
<path d="M568.2 532.4 Q565.8 529.9 565.0 526.6 L565.0 525.0 L579.8 525.0 L579.8 526.6 Q579.0 529.9 576.6 532.4 Z" fill="#00ff00" stroke="#00ff00" stroke-width="0.6" />
<line x1="662.3" y1="340.0" x2="656.8" y2="340.0" stroke="#00ff00" stroke-width="1.2" />
<line x1="656.8" y1="332.9" x2="656.8" y2="347.1" stroke="#00ff00" stroke-width="1.2" />
<path d="M656.8 335.8 Q654.3 333.4 651.0 332.6 L649.4 332.6 L649.4 347.4 L651.0 347.4 Q654.3 346.6 656.8 344.2 Z" fill="#00ff00" stroke="#00ff00" stroke-width="0.6" />
<line x1="662.3" y1="386.4" x2="656.8" y2="386.4" stroke="#00ff00" stroke-width="1.2" />
<line x1="656.8" y1="379.3" x2="656.8" y2="393.5" stroke="#00ff00" stroke-width="1.2" />
<path d="M656.8 382.2 Q654.3 379.8 651.0 379.0 L649.4 379.0 L649.4 393.8 L651.0 393.8 Q654.3 393.0 656.8 390.6 Z" fill="#00ff00" stroke="#00ff00" stroke-width="0.6" />
<line x1="662.3" y1="472.3" x2="656.8" y2="472.3" stroke="#00ff00" stroke-width="1.2" />
<line x1="656.8" y1="465.2" x2="656.8" y2="479.4" stroke="#00ff00" stroke-width="1.2" />
<path d="M656.8 468.1 Q654.3 465.7 651.0 464.9 L649.4 464.9 L649.4 479.7 L651.0 479.7 Q654.3 478.9 656.8 476.5 Z" fill="#00ff00" stroke="#00ff00" stroke-width="0.6" />
<line x1="493.6" y1="358.5" x2="525.6" y2="358.5" stroke="#00ff00" stroke-width="1.15" />
<line x1="493.6" y1="362.8" x2="525.6" y2="362.8" stroke="#00ff00" stroke-width="1.15" />
<line x1="493.6" y1="355.1" x2="493.6" y2="366.2" stroke="#00ff00" stroke-width="1.15" />
<line x1="525.6" y1="355.1" x2="525.6" y2="366.2" stroke="#00ff00" stroke-width="1.15" />
<line x1="493.6" y1="485.4" x2="525.6" y2="485.4" stroke="#00ff00" stroke-width="1.15" />
<line x1="493.6" y1="489.6" x2="525.6" y2="489.6" stroke="#00ff00" stroke-width="1.15" />
<line x1="493.6" y1="482.0" x2="493.6" y2="493.0" stroke="#00ff00" stroke-width="1.15" />
<line x1="525.6" y1="482.0" x2="525.6" y2="493.0" stroke="#00ff00" stroke-width="1.15" />
<line x1="604.6" y1="358.5" x2="636.6" y2="358.5" stroke="#00ff00" stroke-width="1.15" />
<line x1="604.6" y1="362.8" x2="636.6" y2="362.8" stroke="#00ff00" stroke-width="1.15" />
<line x1="604.6" y1="355.1" x2="604.6" y2="366.2" stroke="#00ff00" stroke-width="1.15" />
<line x1="636.6" y1="355.1" x2="636.6" y2="366.2" stroke="#00ff00" stroke-width="1.15" />
<line x1="604.6" y1="485.4" x2="636.6" y2="485.4" stroke="#00ff00" stroke-width="1.15" />
<line x1="604.6" y1="489.6" x2="636.6" y2="489.6" stroke="#00ff00" stroke-width="1.15" />
<line x1="604.6" y1="482.0" x2="604.6" y2="493.0" stroke="#00ff00" stroke-width="1.15" />
<line x1="636.6" y1="482.0" x2="636.6" y2="493.0" stroke="#00ff00" stroke-width="1.15" />
<line x1="1011.4" y1="333.0" x2="1011.4" y2="338.5" stroke="#00ff00" stroke-width="1.2" />
<line x1="1004.3" y1="338.5" x2="1018.5" y2="338.5" stroke="#00ff00" stroke-width="1.2" />
<path d="M1007.2 338.5 Q1004.8 341.0 1004.0 344.3 L1004.0 345.9 L1018.8 345.9 L1018.8 344.3 Q1018.0 341.0 1015.6 338.5 Z" fill="#00ff00" stroke="#00ff00" stroke-width="0.6" />
<line x1="1132.3" y1="333.0" x2="1132.3" y2="338.5" stroke="#00ff00" stroke-width="1.2" />
<line x1="1125.2" y1="338.5" x2="1139.4" y2="338.5" stroke="#00ff00" stroke-width="1.2" />
<path d="M1128.1 338.5 Q1125.7 341.0 1124.9 344.3 L1124.9 345.9 L1139.7 345.9 L1139.7 344.3 Q1138.9 341.0 1136.5 338.5 Z" fill="#00ff00" stroke="#00ff00" stroke-width="0.6" />
<line x1="1038.3" y1="537.9" x2="1038.3" y2="532.4" stroke="#00ff00" stroke-width="1.2" />
<line x1="1031.2" y1="532.4" x2="1045.4" y2="532.4" stroke="#00ff00" stroke-width="1.2" />
<path d="M1034.1 532.4 Q1031.7 529.9 1030.9 526.6 L1030.9 525.0 L1045.7 525.0 L1045.7 526.6 Q1044.9 529.9 1042.5 532.4 Z" fill="#00ff00" stroke="#00ff00" stroke-width="0.6" />
<line x1="1132.1" y1="537.9" x2="1132.1" y2="532.4" stroke="#00ff00" stroke-width="1.2" />
<line x1="1125.0" y1="532.4" x2="1139.2" y2="532.4" stroke="#00ff00" stroke-width="1.2" />
<path d="M1127.9 532.4 Q1125.5 529.9 1124.7 526.6 L1124.7 525.0 L1139.5 525.0 L1139.5 526.6 Q1138.7 529.9 1136.3 532.4 Z" fill="#00ff00" stroke="#00ff00" stroke-width="0.6" />
<line x1="911.8" y1="339.0" x2="917.3" y2="339.0" stroke="#00ff00" stroke-width="1.2" />
<line x1="917.3" y1="331.9" x2="917.3" y2="346.1" stroke="#00ff00" stroke-width="1.2" />
<path d="M917.3 334.8 Q919.8 332.4 923.1 331.6 L924.7 331.6 L924.7 346.4 L923.1 346.4 Q919.8 345.6 917.3 343.2 Z" fill="#00ff00" stroke="#00ff00" stroke-width="0.6" />
<line x1="1222.5" y1="339.0" x2="1217.0" y2="339.0" stroke="#00ff00" stroke-width="1.2" />
<line x1="1217.0" y1="331.9" x2="1217.0" y2="346.1" stroke="#00ff00" stroke-width="1.2" />
<path d="M1217.0 334.8 Q1214.5 332.4 1211.2 331.6 L1209.6 331.6 L1209.6 346.4 L1211.2 346.4 Q1214.5 345.6 1217.0 343.2 Z" fill="#00ff00" stroke="#00ff00" stroke-width="0.6" />
<line x1="1233.2" y1="339.0" x2="1238.7" y2="339.0" stroke="#00ff00" stroke-width="1.2" />
<line x1="1238.7" y1="331.9" x2="1238.7" y2="346.1" stroke="#00ff00" stroke-width="1.2" />
<path d="M1238.7 334.8 Q1241.2 332.4 1244.5 331.6 L1246.1 331.6 L1246.1 346.4 L1244.5 346.4 Q1241.2 345.6 1238.7 343.2 Z" fill="#00ff00" stroke="#00ff00" stroke-width="0.6" />
<line x1="911.8" y1="386.4" x2="917.3" y2="386.4" stroke="#00ff00" stroke-width="1.2" />
<line x1="917.3" y1="379.3" x2="917.3" y2="393.5" stroke="#00ff00" stroke-width="1.2" />
<path d="M917.3 382.2 Q919.8 379.8 923.1 379.0 L924.7 379.0 L924.7 393.8 L923.1 393.8 Q919.8 393.0 917.3 390.6 Z" fill="#00ff00" stroke="#00ff00" stroke-width="0.6" />
<line x1="1222.5" y1="386.4" x2="1217.0" y2="386.4" stroke="#00ff00" stroke-width="1.2" />
<line x1="1217.0" y1="379.3" x2="1217.0" y2="393.5" stroke="#00ff00" stroke-width="1.2" />
<path d="M1217.0 382.2 Q1214.5 379.8 1211.2 379.0 L1209.6 379.0 L1209.6 393.8 L1211.2 393.8 Q1214.5 393.0 1217.0 390.6 Z" fill="#00ff00" stroke="#00ff00" stroke-width="0.6" />
<line x1="1233.2" y1="386.4" x2="1238.7" y2="386.4" stroke="#00ff00" stroke-width="1.2" />
<line x1="1238.7" y1="379.3" x2="1238.7" y2="393.5" stroke="#00ff00" stroke-width="1.2" />
<path d="M1238.7 382.2 Q1241.2 379.8 1244.5 379.0 L1246.1 379.0 L1246.1 393.8 L1244.5 393.8 Q1241.2 393.0 1238.7 390.6 Z" fill="#00ff00" stroke="#00ff00" stroke-width="0.6" />
<line x1="911.8" y1="472.3" x2="917.3" y2="472.3" stroke="#00ff00" stroke-width="1.2" />
<line x1="917.3" y1="465.2" x2="917.3" y2="479.4" stroke="#00ff00" stroke-width="1.2" />
<path d="M917.3 468.1 Q919.8 465.7 923.1 464.9 L924.7 464.9 L924.7 479.7 L923.1 479.7 Q919.8 478.9 917.3 476.5 Z" fill="#00ff00" stroke="#00ff00" stroke-width="0.6" />
<line x1="1222.5" y1="472.3" x2="1217.0" y2="472.3" stroke="#00ff00" stroke-width="1.2" />
<line x1="1217.0" y1="465.2" x2="1217.0" y2="479.4" stroke="#00ff00" stroke-width="1.2" />
<path d="M1217.0 468.1 Q1214.5 465.7 1211.2 464.9 L1209.6 464.9 L1209.6 479.7 L1211.2 479.7 Q1214.5 478.9 1217.0 476.5 Z" fill="#00ff00" stroke="#00ff00" stroke-width="0.6" />
<line x1="1233.2" y1="472.3" x2="1238.7" y2="472.3" stroke="#00ff00" stroke-width="1.2" />
<line x1="1238.7" y1="465.2" x2="1238.7" y2="479.4" stroke="#00ff00" stroke-width="1.2" />
<path d="M1238.7 468.1 Q1241.2 465.7 1244.5 464.9 L1246.1 464.9 L1246.1 479.7 L1244.5 479.7 Q1241.2 478.9 1238.7 476.5 Z" fill="#00ff00" stroke="#00ff00" stroke-width="0.6" />
<line x1="942.3" y1="358.4" x2="974.3" y2="358.4" stroke="#00ff00" stroke-width="1.15" />
<line x1="942.3" y1="362.6" x2="974.3" y2="362.6" stroke="#00ff00" stroke-width="1.15" />
<line x1="942.3" y1="355.0" x2="942.3" y2="366.0" stroke="#00ff00" stroke-width="1.15" />
<line x1="974.3" y1="355.0" x2="974.3" y2="366.0" stroke="#00ff00" stroke-width="1.15" />
<line x1="942.3" y1="485.3" x2="974.3" y2="485.3" stroke="#00ff00" stroke-width="1.15" />
<line x1="942.3" y1="489.4" x2="974.3" y2="489.4" stroke="#00ff00" stroke-width="1.15" />
<line x1="942.3" y1="481.9" x2="942.3" y2="492.8" stroke="#00ff00" stroke-width="1.15" />
<line x1="974.3" y1="481.9" x2="974.3" y2="492.8" stroke="#00ff00" stroke-width="1.15" />
<line x1="1053.4" y1="358.4" x2="1085.4" y2="358.4" stroke="#00ff00" stroke-width="1.15" />
<line x1="1053.4" y1="362.6" x2="1085.4" y2="362.6" stroke="#00ff00" stroke-width="1.15" />
<line x1="1053.4" y1="355.0" x2="1053.4" y2="366.0" stroke="#00ff00" stroke-width="1.15" />
<line x1="1085.4" y1="355.0" x2="1085.4" y2="366.0" stroke="#00ff00" stroke-width="1.15" />
<line x1="1053.4" y1="485.3" x2="1085.4" y2="485.3" stroke="#00ff00" stroke-width="1.15" />
<line x1="1053.4" y1="489.4" x2="1085.4" y2="489.4" stroke="#00ff00" stroke-width="1.15" />
<line x1="1053.4" y1="481.9" x2="1053.4" y2="492.8" stroke="#00ff00" stroke-width="1.15" />
<line x1="1085.4" y1="481.9" x2="1085.4" y2="492.8" stroke="#00ff00" stroke-width="1.15" />
<line x1="1164.5" y1="358.4" x2="1196.5" y2="358.4" stroke="#00ff00" stroke-width="1.15" />
<line x1="1164.5" y1="362.6" x2="1196.5" y2="362.6" stroke="#00ff00" stroke-width="1.15" />
<line x1="1164.5" y1="355.0" x2="1164.5" y2="366.0" stroke="#00ff00" stroke-width="1.15" />
<line x1="1196.5" y1="355.0" x2="1196.5" y2="366.0" stroke="#00ff00" stroke-width="1.15" />
<line x1="1164.5" y1="485.3" x2="1196.5" y2="485.3" stroke="#00ff00" stroke-width="1.15" />
<line x1="1164.5" y1="489.4" x2="1196.5" y2="489.4" stroke="#00ff00" stroke-width="1.15" />
<line x1="1164.5" y1="481.9" x2="1164.5" y2="492.8" stroke="#00ff00" stroke-width="1.15" />
<line x1="1196.5" y1="481.9" x2="1196.5" y2="492.8" stroke="#00ff00" stroke-width="1.15" />
<line x1="1332.6" y1="333.0" x2="1332.6" y2="338.5" stroke="#00ff00" stroke-width="1.2" />
<line x1="1325.5" y1="338.5" x2="1339.7" y2="338.5" stroke="#00ff00" stroke-width="1.2" />
<path d="M1328.4 338.5 Q1326.0 341.0 1325.2 344.3 L1325.2 345.9 L1340.0 345.9 L1340.0 344.3 Q1339.2 341.0 1336.8 338.5 Z" fill="#00ff00" stroke="#00ff00" stroke-width="0.6" />
<line x1="1359.8" y1="537.9" x2="1359.8" y2="532.4" stroke="#00ff00" stroke-width="1.2" />
<line x1="1352.7" y1="532.4" x2="1366.9" y2="532.4" stroke="#00ff00" stroke-width="1.2" />
<path d="M1355.6 532.4 Q1353.2 529.9 1352.4 526.6 L1352.4 525.0 L1367.2 525.0 L1367.2 526.6 Q1366.4 529.9 1364.0 532.4 Z" fill="#00ff00" stroke="#00ff00" stroke-width="0.6" />
<line x1="1263.7" y1="358.4" x2="1295.7" y2="358.4" stroke="#00ff00" stroke-width="1.15" />
<line x1="1263.7" y1="362.6" x2="1295.7" y2="362.6" stroke="#00ff00" stroke-width="1.15" />
<line x1="1263.7" y1="355.0" x2="1263.7" y2="366.0" stroke="#00ff00" stroke-width="1.15" />
<line x1="1295.7" y1="355.0" x2="1295.7" y2="366.0" stroke="#00ff00" stroke-width="1.15" />
<line x1="1263.7" y1="485.3" x2="1295.7" y2="485.3" stroke="#00ff00" stroke-width="1.15" />
<line x1="1263.7" y1="489.4" x2="1295.7" y2="489.4" stroke="#00ff00" stroke-width="1.15" />
<line x1="1263.7" y1="481.9" x2="1263.7" y2="492.8" stroke="#00ff00" stroke-width="1.15" />
<line x1="1295.7" y1="481.9" x2="1295.7" y2="492.8" stroke="#00ff00" stroke-width="1.15" />
<line x1="1374.9" y1="358.4" x2="1406.9" y2="358.4" stroke="#00ff00" stroke-width="1.15" />
<line x1="1374.9" y1="362.6" x2="1406.9" y2="362.6" stroke="#00ff00" stroke-width="1.15" />
<line x1="1374.9" y1="355.0" x2="1374.9" y2="366.0" stroke="#00ff00" stroke-width="1.15" />
<line x1="1406.9" y1="355.0" x2="1406.9" y2="366.0" stroke="#00ff00" stroke-width="1.15" />
<line x1="1374.9" y1="485.3" x2="1406.9" y2="485.3" stroke="#00ff00" stroke-width="1.15" />
<line x1="1374.9" y1="489.4" x2="1406.9" y2="489.4" stroke="#00ff00" stroke-width="1.15" />
<line x1="1374.9" y1="481.9" x2="1374.9" y2="492.8" stroke="#00ff00" stroke-width="1.15" />
<line x1="1406.9" y1="481.9" x2="1406.9" y2="492.8" stroke="#00ff00" stroke-width="1.15" />
<rect x="719.4" y="320.6" width="14.6" height="15.2" rx="0.8" fill="#000" stroke="#00ff00" stroke-width="1.25"/>
<circle cx="726.7" cy="328.2" r="5.9" fill="none" stroke="#00d800" stroke-width="1.0"/>
<line x1="719.4" y1="320.9" x2="734.0" y2="335.5" stroke="#00c000" stroke-width="0.9" />
<line x1="719.4" y1="335.5" x2="734.0" y2="320.9" stroke="#00c000" stroke-width="0.9" />
<circle cx="726.7" cy="328.2" r="3.1" fill="#00ff00" stroke="none" stroke-width="0"/>
<rect x="719.4" y="387.9" width="14.6" height="15.2" rx="0.8" fill="#000" stroke="#00ff00" stroke-width="1.25"/>
<circle cx="726.7" cy="395.5" r="5.9" fill="none" stroke="#00d800" stroke-width="1.0"/>
<line x1="719.4" y1="388.2" x2="734.0" y2="402.8" stroke="#00c000" stroke-width="0.9" />
<line x1="719.4" y1="402.8" x2="734.0" y2="388.2" stroke="#00c000" stroke-width="0.9" />
<circle cx="726.7" cy="395.5" r="3.1" fill="#00ff00" stroke="none" stroke-width="0"/>
<rect x="706.3" y="485.4" width="14.6" height="15.2" rx="0.8" fill="#000" stroke="#00ff00" stroke-width="1.25"/>
<circle cx="713.6" cy="493.0" r="5.9" fill="none" stroke="#00d800" stroke-width="1.0"/>
<line x1="706.3" y1="485.7" x2="720.9" y2="500.3" stroke="#00c000" stroke-width="0.9" />
<line x1="706.3" y1="500.3" x2="720.9" y2="485.7" stroke="#00c000" stroke-width="0.9" />
<circle cx="713.6" cy="493.0" r="3.1" fill="#00ff00" stroke="none" stroke-width="0"/>
<line x1="702.0" y1="446.7" x2="702.0" y2="452.2" stroke="#00ff00" stroke-width="1.2" />
<line x1="694.9" y1="452.2" x2="709.1" y2="452.2" stroke="#00ff00" stroke-width="1.2" />
<path d="M697.8 452.2 Q695.4 454.7 694.6 458.0 L694.6 459.6 L709.4 459.6 L709.4 458.0 Q708.6 454.7 706.2 452.2 Z" fill="#00ff00" stroke="#00ff00" stroke-width="0.6" />
<line x1="720.5" y1="446.7" x2="720.5" y2="452.2" stroke="#00ff00" stroke-width="1.2" />
<line x1="713.4" y1="452.2" x2="727.6" y2="452.2" stroke="#00ff00" stroke-width="1.2" />
<path d="M716.3 452.2 Q713.9 454.7 713.1 458.0 L713.1 459.6 L727.9 459.6 L727.9 458.0 Q727.1 454.7 724.7 452.2 Z" fill="#00ff00" stroke="#00ff00" stroke-width="0.6" />
<line x1="792.0" y1="335.0" x2="797.5" y2="335.0" stroke="#00ff00" stroke-width="1.2" />
<line x1="797.5" y1="327.9" x2="797.5" y2="342.1" stroke="#00ff00" stroke-width="1.2" />
<path d="M797.5 330.8 Q800.0 328.4 803.3 327.6 L804.9 327.6 L804.9 342.4 L803.3 342.4 Q800.0 341.6 797.5 339.2 Z" fill="#00ff00" stroke="#00ff00" stroke-width="0.6" />
<line x1="792.0" y1="348.3" x2="797.5" y2="348.3" stroke="#00ff00" stroke-width="1.2" />
<line x1="797.5" y1="341.2" x2="797.5" y2="355.4" stroke="#00ff00" stroke-width="1.2" />
<path d="M797.5 344.1 Q800.0 341.7 803.3 340.9 L804.9 340.9 L804.9 355.7 L803.3 355.7 Q800.0 354.9 797.5 352.5 Z" fill="#00ff00" stroke="#00ff00" stroke-width="0.6" />
<line x1="791.5" y1="299.3" x2="809.3" y2="287.7" stroke="#00ff00" stroke-width="1.2" />
<ellipse cx="804.8" cy="290.7" rx="4.3" ry="1.6" fill="#00ff00" transform="rotate(-33 804.8 290.7)"/>
<circle cx="791.5" cy="299.4" r="1.3" fill="none" stroke="#00ff00" stroke-width="1"/>
<line x1="611.7" y1="535.8" x2="619.4" y2="529.3" stroke="#00c800" stroke-width="1.1" />
<line x1="619.4" y1="529.3" x2="619.4" y2="529.3" stroke="#00c800" stroke-width="1.1" />
<circle cx="611.7" cy="535.8" r="3.0" fill="#00ff00" stroke="none" stroke-width="0"/>
<line x1="562.7" y1="553.8" x2="572.0" y2="561.9" stroke="#00c800" stroke-width="1.1" />
<line x1="572.0" y1="561.9" x2="573.2" y2="560.3" stroke="#00c800" stroke-width="1.1" />
<circle cx="562.7" cy="553.8" r="3.0" fill="#00ff00" stroke="none" stroke-width="0"/>
<line x1="734.8" y1="536.6" x2="742.7" y2="528.2" stroke="#00c800" stroke-width="1.1" />
<line x1="742.7" y1="528.2" x2="741.3" y2="525.8" stroke="#00c800" stroke-width="1.1" />
<circle cx="734.8" cy="536.6" r="3.0" fill="#00ff00" stroke="none" stroke-width="0"/>
<line x1="736.6" y1="550.2" x2="745.0" y2="558.6" stroke="#00c800" stroke-width="1.1" />
<line x1="745.0" y1="558.6" x2="746.9" y2="557.0" stroke="#00c800" stroke-width="1.1" />
<circle cx="736.6" cy="550.2" r="3.0" fill="#00ff00" stroke="none" stroke-width="0"/>
<line x1="733.5" y1="448.0" x2="741.9" y2="456.0" stroke="#00c800" stroke-width="1.1" />
<line x1="741.9" y1="456.0" x2="743.2" y2="454.3" stroke="#00c800" stroke-width="1.1" />
<circle cx="733.5" cy="448.0" r="3.0" fill="#00ff00" stroke="none" stroke-width="0"/>
<line x1="831.3" y1="393.6" x2="840.5" y2="385.6" stroke="#00c800" stroke-width="1.1" />
<line x1="840.5" y1="385.6" x2="840.5" y2="385.6" stroke="#00c800" stroke-width="1.1" />
<circle cx="831.3" cy="393.6" r="3.0" fill="#00ff00" stroke="none" stroke-width="0"/>
<line x1="898.9" y1="543.8" x2="890.9" y2="552.0" stroke="#00c800" stroke-width="1.1" />
<line x1="890.9" y1="552.0" x2="892.5" y2="553.6" stroke="#00c800" stroke-width="1.1" />
<circle cx="898.9" cy="543.8" r="3.0" fill="#00ff00" stroke="none" stroke-width="0"/>
<line x1="962.7" y1="536.0" x2="971.1" y2="529.2" stroke="#00c800" stroke-width="1.1" />
<line x1="971.1" y1="529.2" x2="972.3" y2="530.6" stroke="#00c800" stroke-width="1.1" />
<circle cx="962.7" cy="536.0" r="3.0" fill="#00ff00" stroke="none" stroke-width="0"/>
<line x1="1284.9" y1="536.0" x2="1293.2" y2="529.2" stroke="#00c800" stroke-width="1.1" />
<line x1="1293.2" y1="529.2" x2="1294.4" y2="530.6" stroke="#00c800" stroke-width="1.1" />
<circle cx="1284.9" cy="536.0" r="3.0" fill="#00ff00" stroke="none" stroke-width="0"/>
<circle cx="1227.9" cy="553.5" r="3" fill="#00ff00" stroke="none" stroke-width="0"/>
<circle cx="556.3" cy="552.6" r="2.1" fill="none" stroke="#00d2d8" stroke-width="1.1"/>
<path d="M556.3 554.6 L552.3 565.9 L560.8 565.9 L556.3 554.6" fill="none" stroke="#00d2d8" stroke-width="1.1" />
<circle cx="728.0" cy="549.3" r="2.1" fill="none" stroke="#00d2d8" stroke-width="1.1"/>
<path d="M728.0 551.3 L724.0 562.8 L732.9 562.8 L728.0 551.3" fill="none" stroke="#00d2d8" stroke-width="1.1" />
<circle cx="1222.0" cy="552.7" r="2.1" fill="none" stroke="#00d2d8" stroke-width="1.1"/>
<path d="M1222.0 554.7 L1218.2 565.5 L1226.4 565.5 L1222.0 554.7" fill="none" stroke="#00d2d8" stroke-width="1.1" />
<path d="M838.3 381.8 L846.9 381.8 L842.6 393.0 L838.3 381.8" fill="none" stroke="#00d2d8" stroke-width="1.2" />
<circle cx="842.6" cy="395.2" r="2" fill="none" stroke="#00d2d8" stroke-width="1.1"/>
<path d="M887.1 530.0 L887.1 538.1 L898.2 534.2 L887.1 530.0" fill="none" stroke="#00d2d8" stroke-width="1.2" />
<circle cx="900.2" cy="534.2" r="2.1" fill="none" stroke="#00d2d8" stroke-width="1.1"/>
<path d="M563 550.7 H568.7 V547.5 H663" fill="none" stroke="#e60000" stroke-width="1.15" />
<line x1="430.0" y1="547.4" x2="442.0" y2="547.4" stroke="#d03a3a" stroke-width="1.2" />
<rect x="430.0" y="541.0" width="11.0" height="2.2" fill="#484848" stroke="none" stroke-width="0"/>
<line x1="430.0" y1="544.6" x2="441.0" y2="544.6" stroke="#707070" stroke-width="0.9" />
<line x1="663.8" y1="533.6" x2="663.8" y2="541.0" stroke="#e60000" stroke-width="1.3" />
<line x1="645.0" y1="547.5" x2="657.0" y2="547.5" stroke="#e60000" stroke-width="1.3" />
<path d="M726.8 328.2 L726.8 395.6 L733 448 L713.6 493 L734.7 536.4" fill="none" stroke="#e60000" stroke-width="1.2" />
<line x1="701.9" y1="445.2" x2="782.8" y2="445.2" stroke="#e60000" stroke-width="1.4" />
<line x1="782.6" y1="445.2" x2="782.6" y2="538.5" stroke="#e60000" stroke-width="1.4" />
<line x1="736.1" y1="537.0" x2="736.1" y2="565.4" stroke="#b00000" stroke-width="2" />
<line x1="788.5" y1="297.5" x2="788.5" y2="565.4" stroke="#b00000" stroke-width="1.8" />
<path d="M790.6 297.5 V396.5 H842" fill="none" stroke="#e60000" stroke-width="1.5" />
<line x1="901.8" y1="545.2" x2="901.8" y2="565.4" stroke="#b00000" stroke-width="1.8" />
<line x1="910.0" y1="533.5" x2="910.0" y2="565.4" stroke="#b00000" stroke-width="1.8" />
<path d="M1233 547.4 H1331.6 V551 H1348.4 V547.4 H1397" fill="none" stroke="#e60000" stroke-width="1.3" />
<line x1="1231.5" y1="534.0" x2="1231.5" y2="541.0" stroke="#e60000" stroke-width="1.3" />
<line x1="1233.8" y1="534.0" x2="1233.8" y2="547.0" stroke="#e60000" stroke-width="1" stroke-dasharray="2 1.5"/>
<line x1="1227.2" y1="553.0" x2="1227.2" y2="565.4" stroke="#e60000" stroke-width="1.3" />
<line x1="430.0" y1="446.9" x2="438.0" y2="446.9" stroke="#d03a3a" stroke-width="1.2" />
<line x1="442.4" y1="447.0" x2="442.4" y2="547.0" stroke="#d03a3a" stroke-width="1.3" />
<path d="M430 331.5 H664 V523" fill="none" stroke="#b297fa" stroke-width="3" />
<path d="M430 539.4 H664.5" fill="none" stroke="#b297fa" stroke-width="3" />
<line x1="509.6" y1="332.0" x2="509.6" y2="358.6" stroke="#b297fa" stroke-width="3" />
<line x1="509.6" y1="489.5" x2="509.6" y2="539.0" stroke="#b297fa" stroke-width="3" />
<line x1="620.6" y1="332.0" x2="620.6" y2="358.6" stroke="#b297fa" stroke-width="3" />
<line x1="620.6" y1="489.5" x2="620.6" y2="539.0" stroke="#b297fa" stroke-width="3" />
<path d="M910.3 523 V331.5 H1224 V539.4 H910" fill="none" stroke="#b297fa" stroke-width="3" />
<line x1="958.3" y1="332.0" x2="958.3" y2="358.4" stroke="#b297fa" stroke-width="3" />
<line x1="958.3" y1="489.3" x2="958.3" y2="539.0" stroke="#b297fa" stroke-width="3" />
<line x1="1069.4" y1="332.0" x2="1069.4" y2="358.4" stroke="#b297fa" stroke-width="3" />
<line x1="1069.4" y1="489.3" x2="1069.4" y2="539.0" stroke="#b297fa" stroke-width="3" />
<line x1="1180.5" y1="332.0" x2="1180.5" y2="358.4" stroke="#b297fa" stroke-width="3" />
<line x1="1180.5" y1="489.3" x2="1180.5" y2="539.0" stroke="#b297fa" stroke-width="3" />
<path d="M1231.7 523.7 V331.5 H1397" fill="none" stroke="#b297fa" stroke-width="3" />
<path d="M1231.5 539.4 H1397" fill="none" stroke="#b297fa" stroke-width="3" />
<line x1="1279.7" y1="332.0" x2="1279.7" y2="358.4" stroke="#b297fa" stroke-width="3" />
<line x1="1279.7" y1="489.3" x2="1279.7" y2="539.0" stroke="#b297fa" stroke-width="3" />
<line x1="1390.9" y1="332.0" x2="1390.9" y2="358.4" stroke="#b297fa" stroke-width="3" />
<line x1="1390.9" y1="489.3" x2="1390.9" y2="539.0" stroke="#b297fa" stroke-width="3" />
<rect x="655.2" y="512.5" width="8.4" height="21.2" fill="#6a62d8" stroke="none" stroke-width="0"/>
<line x1="655.2" y1="509.7" x2="663.6" y2="502.1" stroke="#aaa0f6" stroke-width="0.9" clip-path="url(#hc655)"/>
<line x1="655.2" y1="512.3" x2="663.6" y2="504.7" stroke="#aaa0f6" stroke-width="0.9" clip-path="url(#hc655)"/>
<line x1="655.2" y1="514.9" x2="663.6" y2="507.3" stroke="#aaa0f6" stroke-width="0.9" clip-path="url(#hc655)"/>
<line x1="655.2" y1="517.5" x2="663.6" y2="509.9" stroke="#aaa0f6" stroke-width="0.9" clip-path="url(#hc655)"/>
<line x1="655.2" y1="520.1" x2="663.6" y2="512.5" stroke="#aaa0f6" stroke-width="0.9" clip-path="url(#hc655)"/>
<line x1="655.2" y1="522.7" x2="663.6" y2="515.1" stroke="#aaa0f6" stroke-width="0.9" clip-path="url(#hc655)"/>
<line x1="655.2" y1="525.3" x2="663.6" y2="517.7" stroke="#aaa0f6" stroke-width="0.9" clip-path="url(#hc655)"/>
<line x1="655.2" y1="527.9" x2="663.6" y2="520.3" stroke="#aaa0f6" stroke-width="0.9" clip-path="url(#hc655)"/>
<line x1="655.2" y1="530.5" x2="663.6" y2="522.9" stroke="#aaa0f6" stroke-width="0.9" clip-path="url(#hc655)"/>
<line x1="655.2" y1="533.1" x2="663.6" y2="525.5" stroke="#aaa0f6" stroke-width="0.9" clip-path="url(#hc655)"/>
<line x1="655.2" y1="535.7" x2="663.6" y2="528.1" stroke="#aaa0f6" stroke-width="0.9" clip-path="url(#hc655)"/>
<line x1="655.2" y1="538.3" x2="663.6" y2="530.7" stroke="#aaa0f6" stroke-width="0.9" clip-path="url(#hc655)"/>
<line x1="655.2" y1="540.9" x2="663.6" y2="533.3" stroke="#aaa0f6" stroke-width="0.9" clip-path="url(#hc655)"/>
<line x1="655.2" y1="543.5" x2="663.6" y2="535.9" stroke="#aaa0f6" stroke-width="0.9" clip-path="url(#hc655)"/>
<rect x="909.5" y="512.4" width="8.8" height="21.2" fill="#6a62d8" stroke="none" stroke-width="0"/>
<line x1="909.5" y1="509.9" x2="918.3" y2="502.0" stroke="#aaa0f6" stroke-width="0.9" clip-path="url(#hc909)"/>
<line x1="909.5" y1="512.5" x2="918.3" y2="504.6" stroke="#aaa0f6" stroke-width="0.9" clip-path="url(#hc909)"/>
<line x1="909.5" y1="515.1" x2="918.3" y2="507.2" stroke="#aaa0f6" stroke-width="0.9" clip-path="url(#hc909)"/>
<line x1="909.5" y1="517.7" x2="918.3" y2="509.8" stroke="#aaa0f6" stroke-width="0.9" clip-path="url(#hc909)"/>
<line x1="909.5" y1="520.3" x2="918.3" y2="512.4" stroke="#aaa0f6" stroke-width="0.9" clip-path="url(#hc909)"/>
<line x1="909.5" y1="522.9" x2="918.3" y2="515.0" stroke="#aaa0f6" stroke-width="0.9" clip-path="url(#hc909)"/>
<line x1="909.5" y1="525.5" x2="918.3" y2="517.6" stroke="#aaa0f6" stroke-width="0.9" clip-path="url(#hc909)"/>
<line x1="909.5" y1="528.1" x2="918.3" y2="520.2" stroke="#aaa0f6" stroke-width="0.9" clip-path="url(#hc909)"/>
<line x1="909.5" y1="530.7" x2="918.3" y2="522.8" stroke="#aaa0f6" stroke-width="0.9" clip-path="url(#hc909)"/>
<line x1="909.5" y1="533.3" x2="918.3" y2="525.4" stroke="#aaa0f6" stroke-width="0.9" clip-path="url(#hc909)"/>
<line x1="909.5" y1="535.9" x2="918.3" y2="528.0" stroke="#aaa0f6" stroke-width="0.9" clip-path="url(#hc909)"/>
<line x1="909.5" y1="538.5" x2="918.3" y2="530.6" stroke="#aaa0f6" stroke-width="0.9" clip-path="url(#hc909)"/>
<line x1="909.5" y1="541.1" x2="918.3" y2="533.2" stroke="#aaa0f6" stroke-width="0.9" clip-path="url(#hc909)"/>
<line x1="909.5" y1="543.7" x2="918.3" y2="535.8" stroke="#aaa0f6" stroke-width="0.9" clip-path="url(#hc909)"/>
<rect x="1231.0" y="512.4" width="9.0" height="21.4" fill="#6a62d8" stroke="none" stroke-width="0"/>
<line x1="1231.0" y1="510.1" x2="1240.0" y2="502.0" stroke="#aaa0f6" stroke-width="0.9" clip-path="url(#hc1231)"/>
<line x1="1231.0" y1="512.7" x2="1240.0" y2="504.6" stroke="#aaa0f6" stroke-width="0.9" clip-path="url(#hc1231)"/>
<line x1="1231.0" y1="515.3" x2="1240.0" y2="507.2" stroke="#aaa0f6" stroke-width="0.9" clip-path="url(#hc1231)"/>
<line x1="1231.0" y1="517.9" x2="1240.0" y2="509.8" stroke="#aaa0f6" stroke-width="0.9" clip-path="url(#hc1231)"/>
<line x1="1231.0" y1="520.5" x2="1240.0" y2="512.4" stroke="#aaa0f6" stroke-width="0.9" clip-path="url(#hc1231)"/>
<line x1="1231.0" y1="523.1" x2="1240.0" y2="515.0" stroke="#aaa0f6" stroke-width="0.9" clip-path="url(#hc1231)"/>
<line x1="1231.0" y1="525.7" x2="1240.0" y2="517.6" stroke="#aaa0f6" stroke-width="0.9" clip-path="url(#hc1231)"/>
<line x1="1231.0" y1="528.3" x2="1240.0" y2="520.2" stroke="#aaa0f6" stroke-width="0.9" clip-path="url(#hc1231)"/>
<line x1="1231.0" y1="530.9" x2="1240.0" y2="522.8" stroke="#aaa0f6" stroke-width="0.9" clip-path="url(#hc1231)"/>
<line x1="1231.0" y1="533.5" x2="1240.0" y2="525.4" stroke="#aaa0f6" stroke-width="0.9" clip-path="url(#hc1231)"/>
<line x1="1231.0" y1="536.1" x2="1240.0" y2="528.0" stroke="#aaa0f6" stroke-width="0.9" clip-path="url(#hc1231)"/>
<line x1="1231.0" y1="538.7" x2="1240.0" y2="530.6" stroke="#aaa0f6" stroke-width="0.9" clip-path="url(#hc1231)"/>
<line x1="1231.0" y1="541.3" x2="1240.0" y2="533.2" stroke="#aaa0f6" stroke-width="0.9" clip-path="url(#hc1231)"/>
<line x1="1231.0" y1="543.9" x2="1240.0" y2="535.8" stroke="#aaa0f6" stroke-width="0.9" clip-path="url(#hc1231)"/>
<path d="M657.5 547.8 V568.5 Q657.5 572.8 662 572.8 H1233 Q1237.3 572.8 1237.3 568.5 V547.6 H1230.5 V565.4 H664 V547.8 Z" fill="#b59cf9"/>
<rect x="661.0" y="567.7" width="573.0" height="2.9" fill="#7d6cdb" stroke="none" stroke-width="0"/>
<rect x="659.3" y="548.5" width="2.9" height="19.5" fill="#8a78e2" stroke="none" stroke-width="0"/>
<rect x="1232.4" y="548.5" width="2.9" height="19.5" fill="#8a78e2" stroke="none" stroke-width="0"/>
<path d="M776 566 V540.5 Q776 538.4 778 538.4 H781 Q783 538.4 783 540.5 V566 Z" fill="#b59cf9"/>
<rect x="778.4" y="541.0" width="2.2" height="26.0" fill="#8674de" stroke="none" stroke-width="0"/>
<rect x="657.3" y="541.0" width="1.6" height="7.0" fill="#00d2d8" stroke="none" stroke-width="0"/>
<rect x="662.4" y="541.0" width="1.4" height="7.0" fill="#009aa0" stroke="none" stroke-width="0"/>
<rect x="659.8" y="541.0" width="1.4" height="6.5" fill="#0000e0" stroke="none" stroke-width="0"/>
<path d="M657 569.5 L658.5 572.8 L661 573.3" fill="none" stroke="#00d2d8" stroke-width="1" />
<path d="M1236.5 570 L1238 573.5" fill="none" stroke="#00d2d8" stroke-width="1" />
<text x="661" y="346.3" font-size="5.6" font-weight="bold" fill="#e8e8e8" text-anchor="middle" font-family="'Liberation Sans',sans-serif">C</text>
<text x="913.2" y="346" font-size="5.6" font-weight="bold" fill="#e8e8e8" text-anchor="middle" font-family="'Liberation Sans',sans-serif">C</text>
<text x="1220.5" y="346" font-size="5.6" font-weight="bold" fill="#e8e8e8" text-anchor="middle" font-family="'Liberation Sans',sans-serif">C</text>
<text x="1234.3" y="346" font-size="5.6" font-weight="bold" fill="#e8e8e8" text-anchor="middle" font-family="'Liberation Sans',sans-serif">C</text>
<text x="698" y="450.6" font-size="5.4" font-weight="bold" fill="#e8e8e8" text-anchor="middle" font-family="'Liberation Sans',sans-serif">X</text>
<text x="716.6" y="450.6" font-size="5.4" font-weight="bold" fill="#e8e8e8" text-anchor="middle" font-family="'Liberation Sans',sans-serif">W</text>
<path d="M442.4 434.8 L451.0 438.3 L454.5 446.9 L451.0 455.5 L442.4 459.0 L433.8 455.5 L430.3 446.9 L433.8 438.3 L442.4 434.8" fill="none" stroke="#008a00" stroke-width="1.1" />
<path d="M442.4 535.3 L451.0 538.8 L454.5 547.4 L451.0 556.0 L442.4 559.5 L433.8 556.0 L430.3 547.4 L433.8 538.8 L442.4 535.3" fill="none" stroke="#008a00" stroke-width="1.1" />
<path d="M442.6 698.0 L451.3 701.6 L454.9 710.3 L451.3 719.0 L442.6 722.6 L433.9 719.0 L430.3 710.3 L433.9 701.6 L442.6 698.0" fill="none" stroke="#008a00" stroke-width="1.1" />
<line x1="430.0" y1="539.4" x2="458.0" y2="539.4" stroke="#b297fa" stroke-width="3" />
<line x1="442.4" y1="547.4" x2="442.4" y2="698.0" stroke="#008a00" stroke-width="1.4" />
<line x1="430.0" y1="648.1" x2="442.0" y2="648.1" stroke="#007a00" stroke-width="2" />
<line x1="438.0" y1="652.8" x2="447.5" y2="643.0" stroke="#008a00" stroke-width="1.1" />
<text x="442" y="453" font-size="17.5" fill="#fff" text-anchor="middle" font-family="'Liberation Sans',sans-serif">B</text>
<text x="442" y="554" font-size="17.5" fill="#fff" text-anchor="middle" font-family="'Liberation Sans',sans-serif">A</text>
<text x="442.7" y="716.8" font-size="17.5" fill="#fff" text-anchor="middle" font-family="'Liberation Sans',sans-serif">2</text>
<line x1="430.0" y1="602.6" x2="1397.0" y2="602.6" stroke="#d4d4d4" stroke-width="1.4" />
<text x="0" y="0" transform="translate(479.9 731.2) scale(0.84 1)" font-size="16.8" fill="#00e000" text-anchor="middle" font-family="'Liberation Sans',sans-serif">Y</text>
<path d="M479.8 731.7 L485.3 742.9 L482.2 742.9 L482.2 758 L477.8 758 L477.8 742.9 L474.4 742.9 Z" fill="#00ff00"/>
<circle cx="480.0" cy="760.3" r="4.6" fill="#0000d0" stroke="none" stroke-width="0"/>
<path d="M498 755.6 L502.5 757 L498 758.5 Z" fill="#e00000"/>
<text x="0" y="0" transform="translate(516.2 766.8) scale(0.84 1)" font-size="16.8" fill="#e00000" text-anchor="middle" font-family="'Liberation Sans',sans-serif">X</text>
<path d="M430 376 L443.5 379.6 Q446 380.3 446 383 V429 Q446 431.8 443.5 432.5 L430 437.7 Z" fill="#4d4d4d"/>
<path d="M440.3 403 L435.5 407.5 L440.3 412" fill="none" stroke="#bdbdbd" stroke-width="1.1"/>
<path d="M1397 376 L1383.5 381.6 Q1381 382.4 1381 385 V428.500 Q1381 431.300 1383.500 432 L1397 436.800 Z" fill="#4d4d4d"/>
<path d="M1387.3 401.5 L1392 406 L1387.3 410.5" fill="none" stroke="#bdbdbd" stroke-width="1.1"/>
</svg>
<!--/CAD-->
<!--RTB-->
<div id="rtb" class="abs" style="left:1364px;top:1px;width:33px;height:227px;background:#fff;border-radius:4px 3px 3px 4px;"></div>
<svg class="abs" style="left:1364px;top:0;" width="34" height="230" viewBox="1364 0 34 230">
  <!-- orbit -->
  <circle cx="1380" cy="24.300" r="9.300" fill="none" stroke="#4a4f5e" stroke-width="1.100"/>
  <ellipse cx="1380" cy="22.800" rx="11.300" ry="5.600" fill="none" stroke="#2b7de9" stroke-width="1.200" transform="rotate(-27 1380 22.800)"/>
  <!-- 3D cube -->
  <path d="M1371.500 48.300 H1384.500 a1 1 0 0 1 1 1 V61.500 a1 1 0 0 1 -1 1 H1371.500 a1 1 0 0 1 -1 -1 V49.300 a1 1 0 0 1 1 -1 Z" fill="none" stroke="#4a4f5e" stroke-width="1.100"/>
  <path d="M1370.800 48.600 L1375.300 43.600 Q1375.800 43.100 1376.500 43.100 H1389 Q1390 43.100 1390 44.100 V56.500 Q1390 57.200 1389.500 57.700 L1385.300 62" fill="none" stroke="#4a4f5e" stroke-width="1.100"/>
  <path d="M1385.300 48.600 L1389.800 43.500" fill="none" stroke="#4a4f5e" stroke-width="1.100"/>
  <text x="1378" y="60" font-size="7.500" font-weight="bold" fill="#2b7de9" text-anchor="middle" font-family="'Liberation Sans',sans-serif">3D</text>
  <!-- cube blue top -->
  <path d="M1370.800 77.600 L1375.300 72.600 Q1375.800 72.100 1376.500 72.100 H1389.300 L1385.300 77.600 Z" fill="#c9daf5" stroke="#2b7de9" stroke-width="1.200" stroke-linejoin="round"/>
  <path d="M1371.500 77.600 H1384.500 a1 1 0 0 1 1 1 V90.500 a1 1 0 0 1 -1 1 H1371.500 a1 1 0 0 1 -1 -1 V78.600 a1 1 0 0 1 1 -1 Z" fill="none" stroke="#4a4f5e" stroke-width="1.100"/>
  <path d="M1389.800 72.800 V85.500 Q1390 86.200 1389.500 86.700 L1385.500 91" fill="none" stroke="#4a4f5e" stroke-width="1.100"/>
  <path d="M1377.600 100 H1383.600 L1380.600 104 Z" fill="#4a4a4a"/>
  <!-- blue filled cube -->
  <path d="M1371.500 116.400 H1384.500 a1 1 0 0 1 1 1 V129.400 a1 1 0 0 1 -1 1 H1371.500 a1 1 0 0 1 -1 -1 V117.400 a1 1 0 0 1 1 -1 Z M1370.800 116.600 L1375.300 111.600 Q1375.800 111.100 1376.500 111.100 H1389 Q1390 111.100 1390 112.100 V124.500 Q1390 125.200 1389.500 125.700 L1385.300 130.200" fill="#c9daf5" stroke="#2b7de9" stroke-width="1.200" stroke-linejoin="round"/>
  <path d="M1385.300 116.600 L1389.800 111.500" fill="none" stroke="#2b7de9" stroke-width="1.200"/>
  <path d="M1377.600 139.200 H1383.600 L1380.600 143.200 Z" fill="#4a4a4a"/>
  <!-- rotate -->
  <path d="M1384.200 152.200 A9.200 9.200 0 1 1 1376.300 151.700" fill="none" stroke="#4a4f5e" stroke-width="1.100"/>
  <path d="M1378 148.200 L1382.300 151.200 L1378 154.200 Z" fill="#2b7de9"/>
  <path d="M1377.600 177.800 H1383.600 L1380.600 181.800 Z" fill="#4a4a4a"/>
  <line x1="1369.200" y1="187.200" x2="1392" y2="187.200" stroke="#4a4a4a" stroke-width="0.800"/>
  <!-- doc eye -->
  <path d="M1379.500 213.300 H1371.500 a1 1 0 0 1 -1 -1 V195.300 a1 1 0 0 1 1 -1 H1388.500 a1 1 0 0 1 1 1 V204.500" fill="none" stroke="#4a4f5e" stroke-width="1.100"/>
  <path d="M1373.500 199 h2 M1377.500 199 h8 M1373.500 203.200 h2 M1377.500 203.200 h5 M1373.500 207.400 h2 M1377.500 207.400 h2.500" stroke="#4a4f5e" stroke-width="1"/>
  <path d="M1381.500 211 Q1385.500 206.300 1389.800 211 Q1385.500 215.700 1381.500 211 Z" fill="#fff" stroke="#2b7de9" stroke-width="1.100"/>
  <circle cx="1385.600" cy="211" r="1.500" fill="#2b7de9"/>
</svg>
<div class="abs" style="left:1313px;top:688px;width:40px;height:40px;border-radius:50%;background:#1a73e8;"></div>
<svg class="abs" style="left:1313px;top:688px;" width="40" height="40" viewBox="0 0 40 40"><path d="M20.0 12.3 L22.5 17.1 L27.9 18.0 L24.1 21.9 L24.9 27.3 L20.0 24.9 L15.1 27.3 L15.9 21.9 L12.1 18.0 L17.5 17.1 Z" fill="#fff" stroke="#fff" stroke-width="3" stroke-linejoin="round"/></svg>
<!--/RTB-->
<div id="topline" class="abs"></div>
<div id="rightline" class="abs"></div>
</body>
</html>
